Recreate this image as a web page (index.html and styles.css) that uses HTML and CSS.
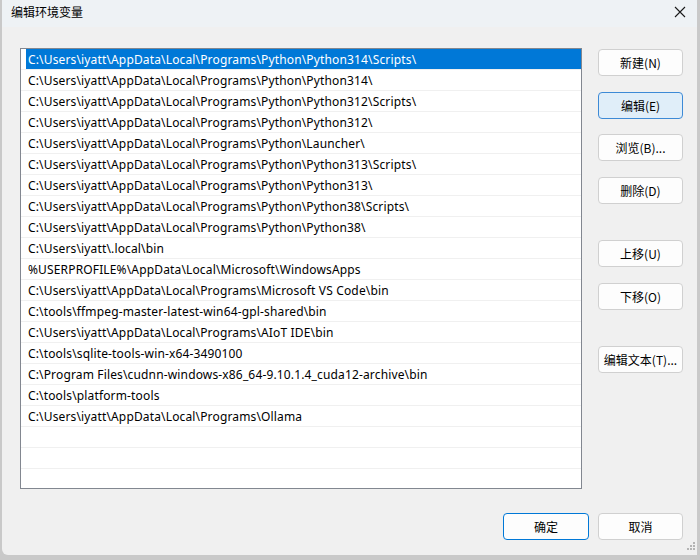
FILE: index.html
```html
<!DOCTYPE html>
<html lang="zh-CN">
<head>
  <meta charset="UTF-8">
  <title>编辑环境变量</title>
  <link rel="stylesheet" href="styles.css">
</head>
<body>
  <div class="dialog">
    <!-- Title bar -->
    <div class="titlebar">
      <span class="title">编辑环境变量</span>
      <svg class="close" width="12" height="12" viewBox="0 0 12 12">
        <path d="M1 1 L11 11 M11 1 L1 11" stroke="#1a1a1a" stroke-width="1.1" fill="none"/>
      </svg>
    </div>

    <!-- List and side buttons -->
    <div class="content">
      <div class="list">
        <div class="row selected"><span>C:\Users\iyatt\AppData\Local\Programs\Python\Python314\Scripts\</span></div>
        <div class="row"><span>C:\Users\iyatt\AppData\Local\Programs\Python\Python314\</span></div>
        <div class="row"><span>C:\Users\iyatt\AppData\Local\Programs\Python\Python312\Scripts\</span></div>
        <div class="row"><span>C:\Users\iyatt\AppData\Local\Programs\Python\Python312\</span></div>
        <div class="row"><span>C:\Users\iyatt\AppData\Local\Programs\Python\Launcher\</span></div>
        <div class="row"><span>C:\Users\iyatt\AppData\Local\Programs\Python\Python313\Scripts\</span></div>
        <div class="row"><span>C:\Users\iyatt\AppData\Local\Programs\Python\Python313\</span></div>
        <div class="row"><span>C:\Users\iyatt\AppData\Local\Programs\Python\Python38\Scripts\</span></div>
        <div class="row"><span>C:\Users\iyatt\AppData\Local\Programs\Python\Python38\</span></div>
        <div class="row"><span>C:\Users\iyatt\.local\bin</span></div>
        <div class="row"><span>%USERPROFILE%\AppData\Local\Microsoft\WindowsApps</span></div>
        <div class="row"><span>C:\Users\iyatt\AppData\Local\Programs\Microsoft VS Code\bin</span></div>
        <div class="row"><span>C:\tools\ffmpeg-master-latest-win64-gpl-shared\bin</span></div>
        <div class="row"><span>C:\Users\iyatt\AppData\Local\Programs\AIoT IDE\bin</span></div>
        <div class="row"><span>C:\tools\sqlite-tools-win-x64-3490100</span></div>
        <div class="row"><span>C:\Program Files\cudnn-windows-x86_64-9.10.1.4_cuda12-archive\bin</span></div>
        <div class="row"><span>C:\tools\platform-tools</span></div>
        <div class="row"><span>C:\Users\iyatt\AppData\Local\Programs\Ollama</span></div>
        <div class="row"></div>
        <div class="row"></div>
        <div class="row"></div>
      </div>

      <div class="side">
        <button class="btn">新建(N)</button>
        <button class="btn focused">编辑(E)</button>
        <button class="btn">浏览(B)...</button>
        <button class="btn">删除(D)</button>
        <button class="btn group">上移(U)</button>
        <button class="btn">下移(O)</button>
        <button class="btn group">编辑文本(T)...</button>
      </div>
    </div>

    <!-- Footer -->
    <div class="footer">
      <button class="btn default">确定</button>
      <button class="btn">取消</button>
    </div>

    <div class="grip">
      <svg width="9" height="9" viewBox="0 0 9 9">
        <rect x="7" y="1" width="2" height="2" fill="#b4b4b4"/>
        <rect x="4" y="4" width="2" height="2" fill="#b4b4b4"/>
        <rect x="7" y="4" width="2" height="2" fill="#b4b4b4"/>
        <rect x="1" y="7" width="2" height="2" fill="#b4b4b4"/>
        <rect x="4" y="7" width="2" height="2" fill="#b4b4b4"/>
        <rect x="7" y="7" width="2" height="2" fill="#b4b4b4"/>
      </svg>
    </div>
  </div>
</body>
</html>
```

FILE: styles.css
```css
:root {
  --dialog-bg: #f0f0f0;
  --title-bg: #eef2f5;
  --accent: #0078d7;
  --list-border: #828790;
  --btn-border: #d0d0d0;
  --text: #000000;
}
html, body {
  margin: 0;
  padding: 0;
}
body {
  width: 700px;
  height: 560px;
  background: #c9c9c9;
  font-family: "Noto Sans", "Noto Sans CJK SC", sans-serif;
  font-size: 12px;
  color: var(--text);
  overflow: hidden;
}
/* Dialog window */
.dialog {
  position: relative;
  width: 695px;
  height: 555px;
  margin-left: 2px;
  background: var(--dialog-bg);
  border-bottom-left-radius: 6px;
  display: flex;
  flex-direction: column;
}
.titlebar {
  height: 27px;
  background: var(--title-bg);
  display: flex;
  align-items: center;
  justify-content: space-between;
  padding: 0 11px 4px 9px;
  box-sizing: border-box;
}
.title {
  font-family: "Noto Sans CJK SC", sans-serif;
  font-size: 12px;
  line-height: 1;
}
.close {
  display: block;
}
/* Main area */
.content {
  display: flex;
  padding: 21px 14px 0 18px;
  gap: 16px;
}
.list {
  width: 560px;
  height: 439px;
  border: 1px solid var(--list-border);
  background: #ffffff;
  overflow: hidden;
}
.row {
  height: 20px;
  border-bottom: 1px solid #f0f0f0;
  display: flex;
}
.row span {
  flex: 1;
  margin-left: 5px;
  padding: 2px 0 0 2px;
  line-height: 18px;
  letter-spacing: 0.15px;
  white-space: nowrap;
}
.row.selected span {
  background: var(--accent);
  color: #ffffff;
}
.side {
  display: flex;
  flex-direction: column;
  gap: 15.5px;
  padding-top: 1px;
}
.btn {
  width: 85px;
  height: 27px;
  padding: 0;
  border: 1px solid var(--btn-border);
  border-radius: 4px;
  background: #fdfdfd;
  font-family: "Noto Sans CJK SC", sans-serif;
  font-size: 12px;
  color: var(--text);
}
.btn.focused {
  background: #e0eef9;
  border-color: #3d8ad6;
}
.btn.default {
  border-color: var(--accent);
  width: 86px;
}
.side .group {
  margin-top: 21px;
}
.footer {
  display: flex;
  justify-content: flex-end;
  gap: 9px;
  padding: 24px 14px 0 0;
}
.grip {
  position: absolute;
  right: 2px;
  bottom: 1px;
}
```
